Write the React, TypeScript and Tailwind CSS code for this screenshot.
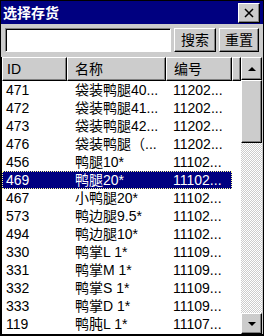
const rows: [string, string, string][] = [
  ["471", "袋装鸭腿40...", "11202..."],
  ["472", "袋装鸭腿41...", "11202..."],
  ["473", "袋装鸭腿42...", "11202..."],
  ["476", "袋装鸭腿（...", "11202..."],
  ["456", "鸭腿10*", "11102..."],
  ["469", "鸭腿20*", "11102..."],
  ["467", "小鸭腿20*", "11102..."],
  ["573", "鸭边腿9.5*", "11102..."],
  ["494", "鸭边腿10*", "11102..."],
  ["330", "鸭掌L 1*", "11109..."],
  ["331", "鸭掌M 1*", "11109..."],
  ["332", "鸭掌S 1*", "11109..."],
  ["333", "鸭掌D 1*", "11109..."],
  ["119", "鸭肫L 1*", "11107..."],
];

const raised =
  "border border-t-white border-l-white border-r-black border-b-black shadow-[inset_-1px_-1px_0_#808080] bg-[#cccccc]";

export default function App() {
  const selected = "469";
  return (
    <div className="w-[264px] h-[336px] flex flex-col bg-[#cccccc] border border-black overflow-hidden font-['Liberation_Sans','Noto_Sans_CJK_SC',sans-serif] text-[14px] text-black select-none">
      {/* title */}
      <div className="h-[23px] shrink-0 bg-[#000080] flex items-center justify-between pl-[2px] pr-[3px]">
        <span className="text-white font-bold text-[14px] leading-none">选择存货</span>
        <div className={`w-[22px] h-[20px] flex items-center justify-center ${raised}`}>
          <svg width="10" height="10" viewBox="0 0 10 10">
            <path d="M1 1L9 9M9 1L1 9" stroke="black" strokeWidth="1.5" />
          </svg>
        </div>
      </div>

      {/* search */}
      <div className="h-[33px] shrink-0 flex items-start gap-[3px] pl-[4px] pt-[4px]">
        <div className="w-[166px] h-[24px] bg-white border border-t-[#808080] border-l-[#808080] border-r-white border-b-white shadow-[inset_1px_1px_0_#000]" />
        <div className={`w-[42px] h-[24px] flex items-center justify-center leading-none ${raised}`}>搜索</div>
        <div className={`w-[40px] h-[24px] flex items-center justify-center leading-none ${raised}`}>重置</div>
      </div>

      {/* list */}
      <div className="flex-1 min-h-0 flex border-l border-b border-black">
        <div className="w-[239px] flex flex-col overflow-hidden bg-white">
          <div className="h-[24px] shrink-0 flex">
            <div className={`w-[65px] flex items-center pl-[4px] leading-none ${raised}`}>ID</div>
            <div className={`w-[99px] flex items-center pl-[7px] leading-none ${raised}`}>名称</div>
            <div className={`w-[66px] flex items-center pl-[7px] leading-none ${raised}`}>编号</div>
            <div className={`w-[9px] ${raised}`} />
          </div>
          {rows.map((r) => {
            const sel = r[0] === selected;
            return (
              <div key={r[0]} className="h-[18px] shrink-0 flex leading-none">
                <div
                  className={`w-[230px] flex items-center ${
                    sel ? "bg-[#000080] text-white outline-1 outline-dotted outline-[#ffff99] -outline-offset-1" : ""
                  }`}
                >
                  <div className="w-[65px] pl-[4px] whitespace-nowrap">{r[0]}</div>
                  <div className="w-[99px] pl-[8px] whitespace-nowrap overflow-hidden">{r[1]}</div>
                  <div className="w-[66px] pl-[7px] whitespace-nowrap">{r[2]}</div>
                </div>
              </div>
            );
          })}
        </div>

        {/* scrollbar */}
        <div className="w-[21px] flex flex-col">
          <div className={`h-[23px] shrink-0 flex items-center justify-center ${raised}`}>
            <div className="w-0 h-0 border-l-[4px] border-r-[4px] border-b-[4px] border-l-transparent border-r-transparent border-b-black" />
          </div>
          <div className={`h-[63px] shrink-0 ${raised}`} />
          <div className="flex-1 bg-[conic-gradient(#cccccc_25%,#ffffff_0_50%,#cccccc_0_75%,#ffffff_0)] bg-[length:2px_2px]" />
          <div className={`h-[21px] shrink-0 flex items-center justify-center ${raised}`}>
            <div className="w-0 h-0 border-l-[4px] border-r-[4px] border-t-[4px] border-l-transparent border-r-transparent border-t-black" />
          </div>
        </div>
      </div>
    </div>
  );
}
